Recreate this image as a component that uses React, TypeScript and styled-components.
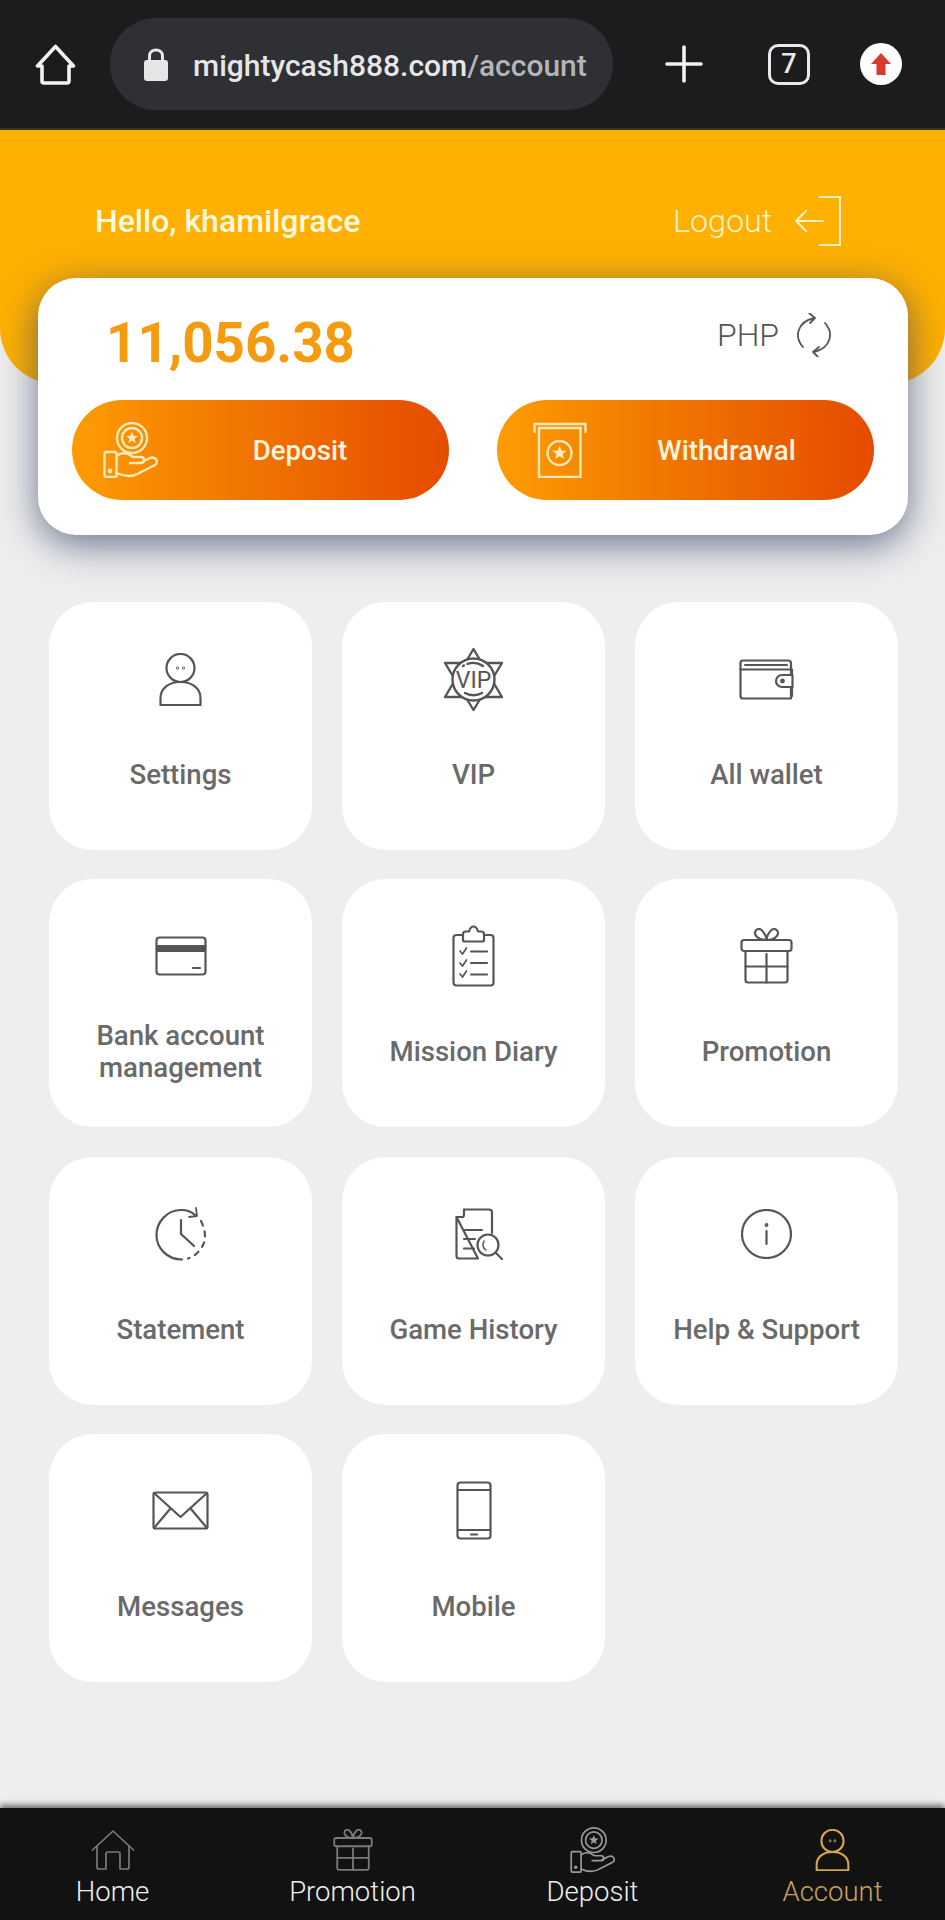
import React from "react";
import styled, { createGlobalStyle } from "styled-components";

const Global = createGlobalStyle`
  html, body { margin: 0; padding: 0; background: #eeeeee; }
  body { font-family: Roboto, "Liberation Sans", sans-serif; }
  * { box-sizing: border-box; }
`;

const Page = styled.div`
  width: 945px;
  height: 1920px;
  display: flex;
  flex-direction: column;
  overflow: hidden;
  background: #eeeeee;
`;

const BrowserBar = styled.header`
  height: 130px;
  flex: none;
  display: flex;
  align-items: center;
  padding: 0 43px 0 35px;
  background: #1c1c1e;
  border-bottom: 2px solid #3a3020;
`;

const UrlPill = styled.div`
  width: 503px;
  height: 92px;
  margin: 0 52px 0 34px;
  padding-left: 34px;
  display: flex;
  align-items: center;
  gap: 25px;
  border-radius: 46px;
  background: #2f3033;
`;

const UrlText = styled.div`
  font-size: 30px;
  font-weight: 500;
  padding-top: 2px;
  color: #e6e6e8;
  white-space: nowrap;
  span { color: #b4b5b8; }
`;

const TabCount = styled.div`
  width: 42px;
  height: 41px;
  margin: 0 50px 0 65px;
  display: flex;
  align-items: center;
  justify-content: center;
  border: 3px solid #e9e9e9;
  border-radius: 10px;
  font-size: 27px;
  font-weight: 500;
  color: #e9e9e9;
`;

const Avatar = styled.div`
  width: 42px;
  height: 42px;
  display: flex;
  align-items: center;
  justify-content: center;
  border-radius: 50%;
  background: #ffffff;
`;

const Hero = styled.section`
  height: 254px;
  flex: none;
  padding: 65px 104px 0 95px;
  display: flex;
  align-items: flex-start;
  justify-content: space-between;
  background: #ffb000;
  border-radius: 0 0 56px 56px;
`;

const Greeting = styled.div`
  font-size: 32px;
  font-weight: 500;
  line-height: 52px;
  color: #fff8df;
`;

const LogoutLink = styled.div`
  display: flex;
  align-items: center;
  gap: 23px;
  height: 52px;
  font-size: 32.2px;
  font-weight: 300;
  color: #fff3c4;
`;

const WalletCard = styled.section`
  position: relative;
  flex: none;
  height: 257px;
  margin: -106px 37px 0 38px;
  padding: 0 34px;
  background: #ffffff;
  border-radius: 38px;
  box-shadow: 0 10px 38px rgba(55, 72, 105, 0.72);
`;

const BalanceRow = styled.div`
  height: 122px;
  padding: 8px 41px 0 34px;
  display: flex;
  align-items: center;
  justify-content: space-between;
`;

const Balance = styled.div`
  font-size: 54.7px;
  font-weight: 700;
  color: #f59b10;
`;

const Currency = styled.div`
  display: flex;
  align-items: center;
  gap: 16px;
  margin-top: -16px;
  font-size: 32px;
  font-weight: 300;
  color: #555555;
`;

const ActionRow = styled.div`
  display: grid;
  grid-template-columns: 377px 377px;
  column-gap: 48px;
`;

const ActionButton = styled.div`
  height: 100px;
  padding: 0 8px 0 31px;
  display: flex;
  align-items: center;
  border-radius: 50px;
  color: #ffe9b8;
  background: linear-gradient(90deg, #fd9c02 0%, #f27a00 40%, #e54b00 100%);
`;

const ActionLabel = styled.div`
  flex: 1;
  text-align: center;
  font-size: 27.7px;
  font-weight: 500;
  color: #fff3dc;
`;

const MenuGrid = styled.main`
  flex: 1;
  margin-top: 67px;
  padding: 0 47px 0 49px;
  display: grid;
  grid-template-columns: repeat(3, 263px);
  grid-auto-rows: 248px;
  align-content: start;
  column-gap: 30px;
  row-gap: 29.3px;
`;

const MenuCard = styled.div`
  padding-top: 40px;
  display: flex;
  flex-direction: column;
  align-items: center;
  background: #ffffff;
  border-radius: 44px;
`;

const IconSlot = styled.div`
  height: 74px;
  display: flex;
  align-items: center;
  justify-content: center;
  color: #555555;
`;

const MenuLabel = styled.div`
  height: 64px;
  margin-top: 27px;
  display: flex;
  align-items: center;
  text-align: center;
  font-size: 27.6px;
  line-height: 32px;
  font-weight: 500;
  color: #6a6a6a;
`;

const BottomNav = styled.nav`
  height: 112px;
  flex: none;
  position: relative;
  display: grid;
  grid-template-columns: repeat(4, 240px);
  justify-content: center;
  background: #121212;
  box-shadow: 0 -3px 6px rgba(0, 0, 0, 0.55);
`;

const NavItem = styled.div<{ $active?: boolean; $tone: string }>`
  padding-top: 18px;
  display: flex;
  flex-direction: column;
  align-items: center;
  font-size: 27.5px;
  font-weight: 300;
  color: ${(p) => (p.$active ? "#c9a257" : "#f0f0f0")};
  svg { color: ${(p) => p.$tone}; }
`;

const NavIconBox = styled.div`
  height: 48px;
  display: flex;
  align-items: center;
  justify-content: center;
`;

const NavLabel = styled.div`
  line-height: 36px;
`;

const Glyph = styled.svg<{ $sw?: number }>`
  display: block;
  fill: none;
  stroke: currentColor;
  stroke-width: ${(p) => p.$sw ?? 2.2};
  stroke-linecap: round;
  stroke-linejoin: round;
  flex: none;
`;

const VipText = styled.text`
  font-family: Roboto, "Liberation Sans", sans-serif;
  font-size: 23px;
  font-weight: 400;
  fill: currentColor;
  stroke: none;
`;

type IconProps = { w?: number; h?: number; sw?: number };

const Person = ({ w = 43, h = 53, sw = 2.2 }: IconProps) => (
  <Glyph width={w} height={h} viewBox="0 0 43 53" $sw={sw}>
    <ellipse cx="21.5" cy="15" rx="14" ry="14" />
    <path d="M1.5 52V45C1.5 36 9 29 21.5 29S41.5 36 41.5 45V52Z" />
    <circle cx="18.5" cy="15" r=".4" />
    <circle cx="24.5" cy="15" r=".4" />
  </Glyph>
);

const Vip = () => (
  <Glyph width={61} height={65} viewBox="0 0 61 65" $sw={2.4}>
    <path d="M30.5 2 59 50H2Z" />
    <path d="M30.5 63 59 16H2Z" />
    <circle cx="30.5" cy="32.5" r="21" fill="#fff" />
    <path d="M20 19C26 15 34 15 40 19" strokeDasharray="1 4 24" />
    <path d="M22 46C27 49 34 49 39 46" />
    <VipText x="30.5" y="41" textAnchor="middle">VIP</VipText>
  </Glyph>
);

const Wallet = () => (
  <Glyph width={55} height={41} viewBox="0 0 55 41">
    <path d="M4 1.5H49Q52 1.5 52 4V39.5H4Q1.5 39.5 1.5 37V4Q1.5 1.5 4 1.5Z" />
    <path d="M1.5 10.5H53V16M53 28V37" />
    <path d="M6 6H48" strokeWidth="2" />
    <path d="M53.5 16H43a6 6 0 0 0 0 12H53.5Z" fill="#fff" />
    <circle cx="43.500" cy="22" r="1.3" />
  </Glyph>
);

const BankCard = () => (
  <Glyph width={52} height={40} viewBox="0 0 52 40">
    <rect x="1.5" y="1.5" width="49" height="37" rx="3" />
    <rect x="2" y="10" width="48" height="5" fill="currentColor" />
    <path d="M38 32H45" />
  </Glyph>
);

const Clipboard = () => (
  <Glyph width={43} height={62} viewBox="0 0 43 62">
    <rect x="1.5" y="10" width="40" height="50.5" rx="3" />
    <path d="M11 15V9Q11 6.500 14 6.500H17C18 3 20 1.500 21.500 1.500S25 3 26 6.500H29Q32 6.500 32 9V15Q32 16.500 30 16.500H13Q11 16.500 11 15Z" fill="#fff" />
    <path d="M8 26l2.500 3 4-6M8 38l2.500 3 4-6M8 49l2.500 3 4-6" strokeWidth="1.700" />
    <path d="M19 26.500H35M19 38H35M19 49.500H35" />
  </Glyph>
);

const Gift = ({ w = 53, h = 56, sw = 2.2 }: IconProps) => (
  <Glyph width={w} height={h} viewBox="0 0 53 56" $sw={sw}>
    <path d="M26.500 12C19 12 14.500 8 15 4.500C15.500 1 19 0 21.500 2C24.500 4.500 26 8 26.500 12C27 8 28.500 4.500 31.500 2C34 0 37.500 1 38 4.500C38.500 8 34 12 26.500 12Z" />
    <rect x="1.500" y="12" width="50" height="11" rx="2.500" />
    <path d="M5.500 23V52Q5.500 54.500 8 54.500H45Q47.500 54.500 47.500 52V23" />
    <path d="M26.500 26V54.500M5.500 38.500H47.500" />
  </Glyph>
);

const ClockBack = () => (
  <Glyph width={52} height={54} viewBox="0 0 52 54">
    <path d="M27 52.500C12 52.500 1.500 41 1.500 28S12 3 26 3C32 3 36 4 40 8" />
    <path d="M41 1 42 9 34 10" strokeWidth="1.800" />
    <path d="M46 14C50 22 52 32 47 40C44 45 40 49 33 51.500" strokeDasharray="5 6" />
    <path d="M26 13V27L39 39" />
  </Glyph>
);

const DocSearch = () => (
  <Glyph width={58} height={52} viewBox="-10 0 58 52">
    <path d="M9 1.500H34Q37 1.500 37 4.500V25M23 50.500H4Q1.500 50.500 1.500 48V9Z" />
    <path d="M9 1.500V7Q9 9 7 9H1.500" />
    <path d="M9 22H27M9 31H20M9 40.500H19" />
    <circle cx="33" cy="37" r="10.500" />
    <path d="M29 33C27 37 28 40 31 42" strokeWidth="1.500" />
    <path d="M41 45 47 51" />
  </Glyph>
);

const Info = () => (
  <Glyph width={51} height={50} viewBox="0 0 51 50">
    <ellipse cx="25.500" cy="25" rx="24.500" ry="24" />
    <path d="M25.500 22V35" />
    <circle cx="25.500" cy="16" r=".8" />
  </Glyph>
);

const Envelope = () => (
  <Glyph width={57} height={39} viewBox="0 0 57 39">
    <rect x="1.500" y="1.500" width="54" height="36" rx="2" />
    <path d="M2 2 28.500 26 55 2M18 18 2 37M39 18 55 37" />
  </Glyph>
);

const Phone = () => (
  <Glyph width={36} height={59} viewBox="0 0 36 59">
    <rect x="1.500" y="1.500" width="33" height="56" rx="3" />
    <path d="M2 9H34M2 49H34" strokeWidth="1.800" />
    <path d="M15 53.500H21" />
  </Glyph>
);

const Coin = ({ cx, cy, r, inner }: { cx: number; cy: number; r: number; inner: number }) => {
  const points: string[] = [];
  for (let i = 0; i < 10; i++) {
    const rad = i % 2 === 0 ? inner * 0.62 : inner * 0.27;
    const a = (Math.PI / 5) * i - Math.PI / 2;
    points.push(`${(cx + rad * Math.cos(a)).toFixed(2)},${(cy + rad * Math.sin(a)).toFixed(2)}`);
  }
  return (
    <>
      <circle cx={cx} cy={cy} r={r} />
      {inner !== r && <circle cx={cx} cy={cy} r={inner} />}
      <polygon points={points.join(" ")} fill="currentColor" stroke="none" />
    </>
  );
};

const HandCoin = ({ w = 56, h = 56, sw = 2.4 }: IconProps) => (
  <Glyph width={w} height={h} viewBox="0 0 56 56" $sw={sw}>
    <Coin cx={29} cy={16} r={15} inner={10} />
    <rect x="1.500" y="30" width="12" height="25" rx="1.500" />
    <circle cx="7" cy="49" r="1.200" fill="currentColor" />
    <path d="M13.500 34C20 29 26 32 30 35H38C42 35 42 41 38 41H27" />
    <path d="M13.500 51C24 56 32 54 38 50L52 43C56 40 53 34 47 36L39 40" />
  </Glyph>
);

const CashSlot = () => (
  <Glyph width={59} height={56} viewBox="-5 0 59 56" $sw={2.4}>
    <path d="M1.500 10V2H52.500V10" />
    <path d="M6 6H48M6 6V55H47.500V6" />
    <Coin cx={26.500} cy={31} r={12} inner={12} />
  </Glyph>
);

const House = () => (
  <Glyph width={44} height={40} viewBox="0 0 44 40" $sw={1.7}>
    <path d="M1.500 20 22 1 42.500 20" />
    <path d="M6 16V37Q6 39 8 39H15V24Q15 22 17 22H27Q29 22 29 24V39H36Q38 39 38 37V16" />
  </Glyph>
);

const Refresh = () => (
  <Glyph width={38} height={44} viewBox="0 0 38 44" $sw={1.8}>
    <path d="M8 34C-1 24 2 9 19 5" />
    <path d="M30 10C39 20 36 35 19 39" />
    <path d="M14 0 20 5 15 10M24 34 18 39 23 44" />
  </Glyph>
);

const LogoutIcon = () => (
  <Glyph width={46} height={50} viewBox="0 0 46 50">
    <path d="M25 1H45V49H25" />
    <path d="M28 25H1M11 15 1 25 11 35" />
  </Glyph>
);

const TopHome = () => (
  <Glyph width={41} height={41} viewBox="0 0 41 41" $sw={3.6} style={{ color: "#f2f2f2" }}>
    <path d="M20.500 2.500 2.500 22H7V37Q7 39 9 39H32Q34 39 34 37V22H38.500Z" />
  </Glyph>
);

const Lock = () => (
  <Glyph width={24} height={34} viewBox="0 0 24 34" $sw={3} style={{ color: "#e6e6e8" }}>
    <path d="M5.500 14V9C5.500 1 18.500 1 18.500 9V14" />
    <rect x="0" y="13" width="24" height="21" rx="3" fill="currentColor" stroke="none" />
  </Glyph>
);

const Plus = () => (
  <Glyph width={38} height={38} viewBox="0 0 38 38" $sw={3.6} style={{ color: "#f2f2f2" }}>
    <path d="M19 2V36M2 19H36" />
  </Glyph>
);

const UpArrow = () => (
  <svg width="22" height="24" viewBox="0 0 22 24">
    <path d="M11 1 21 12H15.500V23H6.500V12H1Z" fill="#d93a2b" />
  </svg>
);

const items: { label: React.ReactNode; icon: React.ReactNode }[] = [
  { label: "Settings", icon: <Person /> },
  { label: "VIP", icon: <Vip /> },
  { label: "All wallet", icon: <Wallet /> },
  { label: <>Bank account<br />management</>, icon: <BankCard /> },
  { label: "Mission Diary", icon: <Clipboard /> },
  { label: "Promotion", icon: <Gift /> },
  { label: "Statement", icon: <ClockBack /> },
  { label: "Game History", icon: <DocSearch /> },
  { label: "Help & Support", icon: <Info /> },
  { label: "Messages", icon: <Envelope /> },
  { label: "Mobile", icon: <Phone /> },
];

export default function App() {
  return (
    <Page>
      <Global />
      <BrowserBar>
        <TopHome />
        <UrlPill>
          <Lock />
          <UrlText>mightycash888.com<span>/account</span></UrlText>
        </UrlPill>
        <Plus />
        <TabCount>7</TabCount>
        <Avatar><UpArrow /></Avatar>
      </BrowserBar>
      <Hero>
        <Greeting>Hello, khamilgrace</Greeting>
        <LogoutLink>Logout <LogoutIcon /></LogoutLink>
      </Hero>
      <WalletCard>
        <BalanceRow>
          <Balance>11,056.38</Balance>
          <Currency>PHP <Refresh /></Currency>
        </BalanceRow>
        <ActionRow>
          <ActionButton>
            <HandCoin />
            <ActionLabel>Deposit</ActionLabel>
          </ActionButton>
          <ActionButton>
            <CashSlot />
            <ActionLabel>Withdrawal</ActionLabel>
          </ActionButton>
        </ActionRow>
      </WalletCard>
      <MenuGrid>
        {items.map((item, i) => (
          <MenuCard key={i}>
            <IconSlot>{item.icon}</IconSlot>
            <MenuLabel>{item.label}</MenuLabel>
          </MenuCard>
        ))}
      </MenuGrid>
      <BottomNav>
        <NavItem $tone="#7a7a7a">
          <NavIconBox><House /></NavIconBox>
          <NavLabel>Home</NavLabel>
        </NavItem>
        <NavItem $tone="#7a7a7a">
          <NavIconBox><Gift w={40} h={42} sw={2.4} /></NavIconBox>
          <NavLabel>Promotion</NavLabel>
        </NavItem>
        <NavItem $tone="#9a9a9a">
          <NavIconBox><HandCoin w={46} h={46} sw={2} /></NavIconBox>
          <NavLabel>Deposit</NavLabel>
        </NavItem>
        <NavItem $active $tone="#d6a650">
          <NavIconBox><Person w={35} h={42} sw={2.6} /></NavIconBox>
          <NavLabel>Account</NavLabel>
        </NavItem>
      </BottomNav>
    </Page>
  );
}
